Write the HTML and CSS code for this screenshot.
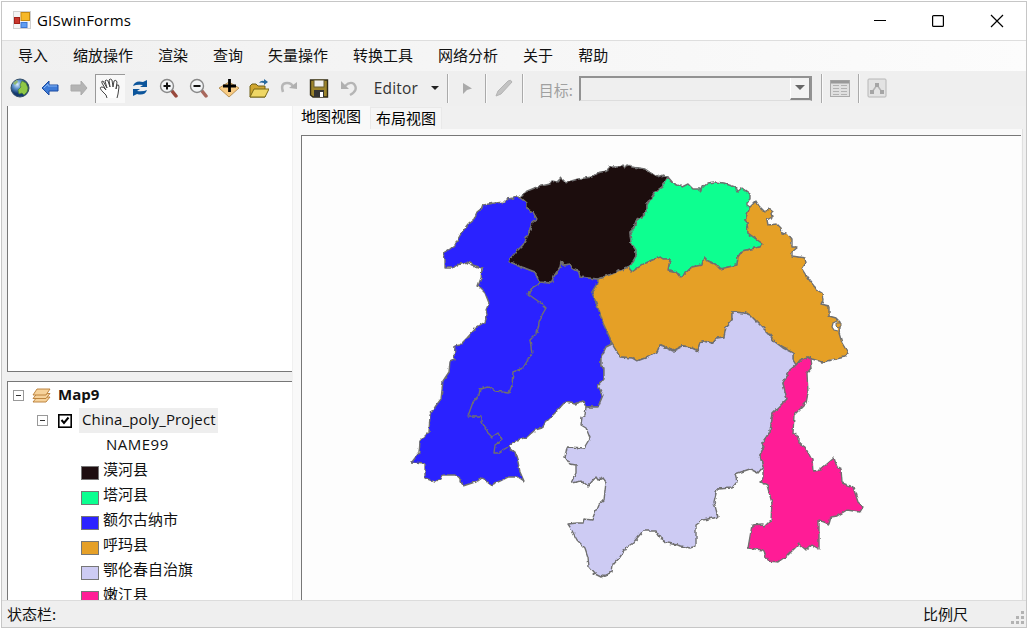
FILE: index.html
```
<!DOCTYPE html>
<html lang="zh-CN">
<head>
<meta charset="utf-8">
<title>GISwinForms</title>
<link rel="stylesheet" href="styles.css">
</head>
<body>
<div class="window">
  <header class="titlebar">
    <svg class="app-icon" width="18" height="18" viewBox="0 0 18 18"><rect x=".5" y=".5" width="17" height="17" fill="#f4f4f4" stroke="#d0d0d0"/><rect x="8" y="1.5" width="8.5" height="8" fill="#f6b828" stroke="#c58a12"/><rect x="1.5" y="6.5" width="5" height="6" fill="#c9362c" stroke="#a32018"/><rect x="8" y="11.5" width="6" height="5" fill="#5f9df0" stroke="#3f77d2"/></svg>
    <span class="title">GISwinForms</span>
    <svg class="controls" width="132" height="14" viewBox="0 0 132 14" fill="none" stroke="#000" stroke-width="1.2"><path d="M1 6.500H13" stroke-width="1"/><rect x="59.6" y="1.6" width="10.8" height="10.8" rx="1"/><path d="M118 1L130 13M130 1L118 13"/></svg>
  </header>
  <nav class="menubar"><span>导入</span><span>缩放操作</span><span>渲染</span><span>查询</span><span>矢量操作</span><span>转换工具</span><span>网络分析</span><span>关于</span><span>帮助</span></nav>
  <div class="toolbar">
    <div class="tool"><svg viewBox="0 0 20 20"><defs><radialGradient id="globe" cx=".35" cy=".3"><stop offset="0" stop-color="#d8ecff"/><stop offset=".5" stop-color="#5b8fc8"/><stop offset="1" stop-color="#143a70"/></radialGradient></defs><circle cx="10" cy="10" r="9" fill="url(#globe)" stroke="#344f68"/><path d="M12 3l4 2 2 5-1 4-3 3-2-2-3 1-1-4 3-3-1-2z" fill="#8fc846" stroke="#4b8130" stroke-width=".7"/><path d="M3 5l4-3 1 2-3 3z" fill="#92b970"/></svg></div>
    <div class="tool"><svg viewBox="0 0 20 20"><path d="M2 10L9 3V7H18V13H9V17Z" fill="#3e7bd7" stroke="#1b4ba0"/><path d="M4 10L8 6V8H17" fill="none" stroke="#82b4f5"/></svg></div>
    <div class="tool"><svg viewBox="0 0 20 20"><path d="M17 10L11 3V7H1V13H11V17Z" fill="#b4b4b4" stroke="#aaa"/></svg></div>
    <div class="tool pressed"><svg class="hand" viewBox="0 0 22 22"><path d="M8 20Q8 17 4 14Q0 10 2 9Q4 8 7 12L3 5Q2 3 4 3L8 10L6 3Q7 1 9 3L11 9L10 2Q11 0 13 2L14 9L15 3Q17 1 18 4L17 11L18 7Q20 6 20 9L19 16L18 20" fill="#fff" stroke="#444" stroke-width="1"/></svg></div>
    <div class="tool"><svg viewBox="0 0 20 20"><path d="M3 8Q5 2 13 4L17 2V9H10L13 7Q7 6 3 8Z" fill="#0c559b"/><path d="M17 12Q15 18 7 16L3 18V11H10L7 13Q13 14 17 12Z" fill="#0c559b"/></svg></div>
    <div class="tool"><svg viewBox="0 0 20 20"><path d="M13 13L17 18" stroke="#98483c" stroke-width="3.500" stroke-linecap="round"/><circle cx="8" cy="8" r="6.5" fill="#f2f4f6" stroke="#888" stroke-width="1.4"/><path d="M4.500 8H11.500M8 4.500V11.500" stroke="#111" stroke-width="2"/></svg></div>
    <div class="tool"><svg viewBox="0 0 20 20"><path d="M13 13L17 18" stroke="#a8675c" stroke-width="3.500" stroke-linecap="round"/><circle cx="8" cy="8" r="6.500" fill="#f2f4f6" stroke="#888" stroke-width="1.400"/><path d="M4.500 8H11.500" stroke="#111" stroke-width="2"/></svg></div>
    <div class="tool"><svg viewBox="0 0 20 20"><path d="M0 10L10 4L20 10L10 19Z" fill="#f8cb83" stroke="#a9803f" stroke-width=".8"/><path d="M4 8H17M10.500 1V14" stroke="#000" stroke-width="2.800"/></svg></div>
    <div class="tool"><svg viewBox="0 0 20 20"><path d="M1 19V8L3 6H7L9 8H16V19Z" fill="#d0a630" stroke="#716016"/><path d="M1 19L5 11H20L16 19Z" fill="#efd765" stroke="#796916"/><path d="M10 5Q12 2 15 3V1L19 4L15 7V5Q12 4 10 5Z" fill="#28699d"/></svg></div>
    <div class="tool"><svg viewBox="0 0 20 20"><path d="M4 14Q1 5 8 5Q13 5 14 9" fill="none" stroke="#b7b7b7" stroke-width="2.500"/><path d="M10 10L18 11L18 4Z" fill="#b0b0b0"/></svg></div>
    <div class="tool"><svg viewBox="0 0 20 20"><path d="M1.500 2H18.500V19H4L1.500 17Z" fill="#9c842c" stroke="#302b17" stroke-width="1.400"/><rect x="5" y="2" width="10" height="7" fill="#eee" stroke="#665c31"/><rect x="5" y="12" width="10" height="7" fill="#333"/><rect x="11" y="14" width="3" height="5" fill="#fff"/></svg></div>
    <div class="tool"><svg viewBox="0 0 20 20"><path d="M6 8Q11 3 15 6Q20 12 11 17" fill="none" stroke="#b5b5b5" stroke-width="2.300"/><path d="M2 3V11H10Z" fill="#b0b0b0"/></svg></div>
    <div class="editor">Editor<i class="arrow"></i></div>
    <i class="separator"></i>
    <div class="tool play"><svg viewBox="0 0 20 20"><path d="M6 5L15 10.500L10 12L6 16Z" fill="#aaa"/></svg></div>
    <i class="separator"></i>
    <div class="tool pencil"><svg viewBox="0 0 20 20"><path d="M2 18L4 13L14 3Q17 1 18 4L7 16Z" fill="#c3c3c3" stroke="#b4b4b4"/></svg></div>
    <i class="separator"></i>
    <span class="target">目标:</span>
    <div class="combo"><span class="combo-button"><i class="arrow"></i></span></div>
    <i class="separator"></i>
    <div class="tool table-tool"><svg viewBox="0 0 20 20"><rect x=".5" y="2.500" width="19" height="16" fill="#e0e0e0" stroke="#aaa"/><path d="M1 4H19" stroke="#999" stroke-width="3"/><path d="M3 7.500H9M3 10.500H9M3 13.500H9M3 16.500H9M11 7.500H17M11 10.500H17M11 13.500H17M11 16.500H17" stroke="#b2b2b2"/></svg></div>
    <i class="separator"></i>
    <div class="tool network-tool"><svg viewBox="0 0 20 20"><rect x="1" y="1" width="18" height="18" rx="1" fill="#e3e3e3" stroke="#b6b6b6"/><path d="M5 14L10 7L15 14" fill="none" stroke="#b3b3b3" stroke-width="1.500"/><path d="M8 5h4v4H8zM3 12h4v4H3zM13 12h4v4h-4z" fill="#a5a5a5"/></svg></div>
  </div>
  <main class="content">
    <aside class="sidebar">
      <div class="overview"></div>
      <div class="layers">
        <div class="row map-row"><i class="expander"></i><svg width="20" height="18" viewBox="0 0 20 18" fill="#f6d29a" stroke="#b77c34" stroke-width=".9"><path d="M1 16L5 11H18L14 16Z"/><path d="M1 12.500L5 7.500H18L14 12.500Z"/><path d="M1 9L5 3H18L14 9Z"/></svg><b>Map9</b></div>
        <div class="row layer-row"><i class="expander"></i><svg class="check" width="14" height="14" viewBox="0 0 14 14" fill="none" stroke="#000"><rect x=".8" y=".8" width="12.400" height="12.400" stroke-width="1.600"/><path d="M3.500 6L6 9L10.500 3.500" stroke-width="2"/></svg><span class="layer-name">China_poly_Project</span></div>
        <div class="row field">NAME99</div>
        <div class="row legend"><i class="swatch mohe"></i>漠河县</div>
        <div class="row legend"><i class="swatch tahe"></i>塔河县</div>
        <div class="row legend"><i class="swatch ergun"></i>额尔古纳市</div>
        <div class="row legend"><i class="swatch huma"></i>呼玛县</div>
        <div class="row legend"><i class="swatch oroqen"></i>鄂伦春自治旗</div>
        <div class="row legend"><i class="swatch nenjiang"></i>嫩江县</div>
      </div>
    </aside>
    <section class="viewer">
      <div class="tabs"><span class="tab active">地图视图</span><span class="tab">布局视图</span></div>
      <div class="page"><div class="map">
        <svg viewBox="302 136 720 464" width="720" height="464">
          <defs><filter id="coast" x="-2%" y="-2%" width="104%" height="104%"><feTurbulence type="fractalNoise" baseFrequency=".2" numOctaves="2" seed="4"/><feDisplacementMap in="SourceGraphic" scale="3.5" xChannelSelector="R" yChannelSelector="G"/></filter></defs>
          <g filter="url(#coast)" stroke="#707070" stroke-width="1.400" stroke-linejoin="round">
            <path fill="#2b22ff" d="M520 198L518 197 508 199 505 202 495 203 483 205 482 208 477 212 474 219 468 224 462 232 458 239 455 245 450 249 443 253 445 258 445 268 453 268 457 265 467 262 473 265 482 268 481 278 478 286 485 293 489 303 486 310 487 316 485 322 477 327 467 338 460 345 455 346 454 360 450 362 449 372 443 381 441 399 435 407 430 415 429 432 420 441 419 453 415 458 412 462 425 463 425 478 435 482 441 479 443 475 455 475 461 480 463 486 475 482 482 477 487 482 491 485 500 481 508 477 518 477 524 481 520 472 518 462 515 453 508 447 517 440 527 437 535 430 542 428 545 423 550 418 555 413 565 402 575 404 583 401 586 407 598 407 603 395 598 386 604 379 604 368 601 367 601 358 606 347 612 344 610 338 603 323 598 308 592 292 598 282 598 279 580 277 579 272 573 269 570 264 563 265 561 262 560 267 554 276 551 283 539 282 535 272 522 267 508 261 515 253 523 245 528 235 532 223 537 219 533 212 527 209 527 203Z"/>
            <path fill="#1e0e10" d="M520 197L525 192 537 187 550 184 552 181 557 182 561 178 564 181 568 182 578 179 592 177 597 173 607 171 609 167 620 167 623 165 625 168 628 165 632 167 645 169 657 177 663 175 668 177 662 187 655 192 647 205 647 212 636 221 634 228 630 232 631 243 636 250 636 256 631 265 628 267 612 274 598 279 580 277 579 272 573 269 570 264 563 265 561 262 560 267 554 276 551 283 539 282 535 272 522 267 508 261 515 253 523 245 528 235 532 223 537 219 533 212 527 209 527 203Z"/>
            <path fill="#0aff90" d="M668 177L673 183 682 187 688 184 693 189 700 189 702 191 703 187 708 183 715 182 723 183 735 187 737 192 742 188 750 194 750 199 747 202 747 205 750 207 745 220 747 222 748 233 763 244 760 247 742 251 738 257 737 265 720 269 715 264 708 261 704 257 702 265 692 267 681 277 677 272 668 270 670 259 663 259 660 257 645 263 632 272 628 267 631 265 636 256 636 250 631 243 630 232 634 228 636 221 647 212 647 205 655 192 662 187Z"/>
            <path fill="#e5a028" d="M750 207L756 201 759 206 765 212 769 208 773 211 771 213 772 217 767 220 768 225 777 224 781 228 782 233 787 234 792 240 792 247 798 247 792 252 792 256 805 258 806 263 802 269 807 277 817 290 822 293 823 300 821 304 829 306 829 316 836 318 840 322 840 328 839 333 842 343 848 353 845 357 822 362 812 359 807 357 800 360 796 365 793 360 793 353 783 348 775 342 768 333 750 315 745 313 732 312 732 320 726 327 724 337 717 338 713 343 703 341 700 342 698 351 690 347 683 346 673 351 660 345 657 352 648 357 637 361 632 358 620 357 612 344 610 338 603 323 598 308 592 292 598 282 598 279 612 274 628 267 632 272 645 263 660 257 663 259 670 259 668 270 677 272 681 277 692 267 702 265 704 257 708 261 715 264 720 269 737 265 738 257 742 251 760 247 763 244 748 233 747 222 745 220Z"/>
            <path fill="#cdcbf3" d="M612 344L620 357 632 358 637 361 648 357 657 352 660 345 673 351 683 346 690 347 698 351 700 342 703 341 713 343 717 338 724 337 726 327 732 320 732 312 745 313 750 315 768 333 775 342 783 348 793 353 793 360 796 365 790 370 783 383 787 399 773 413 770 432 762 443 764 447 760 455 763 467 758 473 750 469 735 474 737 482 732 488 717 489 714 502 718 517 703 520 696 525 696 546 690 548 668 543 662 540 656 531 643 531 633 543 627 547 620 557 613 565 612 572 601 577 595 574 589 567 588 557 585 548 577 540 570 527 568 524 577 523 583 523 584 519 592 520 598 505 604 500 606 482 603 478 598 480 596 477 588 486 582 481 571 483 576 473 576 465 570 464 565 457 567 447 584 448 590 438 586 428 581 425 582 417 585 415 586 407 598 407 603 395 598 386 604 379 604 368 601 367 601 358 606 347Z"/>
            <path fill="#ff1e96" d="M796 365L800 361 807 357 811 359 812 367 807 373 808 393 806 403 794 415 793 433 799 437 799 443 805 447 812 460 813 471 820 470 834 458 837 467 841 469 842 483 853 487 858 502 863 507 860 512 847 510 837 516 831 517 829 524 819 520 819 549 812 545 806 550 799 544 788 555 778 562 768 561 763 550 748 548 752 525 762 524 764 527 771 520 772 503 767 485 761 482 763 478 763 467 760 455 764 447 762 443 770 432 773 413 787 399 783 383 790 370Z"/>
            <path fill="none" d="M539 282L538 285 532 288 528 294 542 304 546 308 542 315 539 323 537 333 530 340 532 353 523 368 513 372 512 385 509 393 495 391 488 387 480 389 479 395 473 402 468 416 482 416 482 422 487 432 492 437 498 433 502 440 495 445 494 453 498 453 508 447"/>
          </g>
          <path d="M837 321L833 323 832 327 834 330 838 331" fill="#fdfdfd" stroke="#707070" stroke-width="1.200"/><path d="M836 323L841 323 841 326 838 328 836 326Z" fill="#e5a028" stroke="#707070"/>
        </svg>
      </div></div>
    </section>
  </main>
  <footer class="status"><span>状态栏:</span><span class="scale">比例尺</span><svg width="14" height="14" viewBox="0 0 14 14"><path d="M10 0h3v3h-3zM5 5h3v3H5zM10 5h3v3h-3zM0 10h3v3H0zM5 10h3v3H5zM10 10h3v3h-3z" fill="#b3b3b3"/></svg></footer>
</div>
</body>
</html>
```
FILE: styles.css
```
* { box-sizing: border-box; }
body { margin: 0; width: 1027px; height: 628px; overflow: hidden; background: #fff; color: #111; font: 15px/20px "Open Sans", "Noto Sans CJK SC", sans-serif; }
svg { display: block; flex: none; }
.window { display: flex; flex-direction: column; height: 627px; margin: 1px 0 0 1px; border: 1px solid #c6c6c6; background: #f0f0f0; }
.titlebar { display: flex; align-items: center; height: 39px; flex: none; padding: 0 21px 2px 11px; background: #fff; border-bottom: 1px solid #dedede; }
.title { margin-left: 6px; font-size: 15px; color: #000; letter-spacing: .2px; }
.controls { margin-left: auto; margin-top: 2px; }
.menubar { display: flex; gap: 25px; height: 30px; flex: none; padding: 4px 16px; background: linear-gradient(90deg, #f0f0f0, #fcfcfc); font-family: "Noto Sans CJK SC", sans-serif; font-size: 15px; }
.toolbar { display: flex; align-items: center; height: 35px; flex: none; padding: 0 0 1px 3px; background: #efefef; }
.tool { display: flex; align-items: center; justify-content: center; width: 29.900px; height: 29px; flex: none; }
.tool svg { width: 20px; height: 20px; }
.tool .hand { width: 22px; height: 22px; }
.pressed { background: #f8f8f8; border-top: 1px solid #999; border-left: 1px solid #999; }
.editor { display: flex; align-items: center; width: 83px; padding-left: 10px; font-size: 15.500px; letter-spacing: .2px; color: #333; }
.arrow { width: 0; height: 0; border: 4px solid transparent; border-top-color: #222; border-bottom: 0; margin-left: 13px; }
.separator { width: 2px; height: 29px; flex: none; background: linear-gradient(90deg, #aaa 50%, #fafafa 50%); }
.tool.play { width: 36px; }
.tool.pencil { width: 35px; }
.target { width: 55px; padding: 3px 0 0 15px; flex: none; color: #a0a0a0; font-family: "Noto Sans CJK SC", sans-serif; white-space: nowrap; }
.combo { width: 233px; height: 25px; flex: none; display: flex; justify-content: flex-end; border: 2px solid #929292; border-bottom: 1px solid #ddd; margin-right: 9px; background: #efefef; }
.combo-button { display: flex; align-items: center; justify-content: center; width: 20px; background: #f2f2f2; border-right: 1px solid #888; border-bottom: 2px solid #888; border-left: 1px solid #fff; }
.combo-button .arrow { margin: 0; border-width: 5px; border-bottom: 0; border-top-color: #666; }
.tool.table-tool { width: 35px; }
.tool.network-tool { width: 34px; }
.content { display: flex; flex: 1; min-height: 0; }
.sidebar { display: flex; flex-direction: column; gap: 9px; width: 290px; flex: none; padding-left: 5px; }
.overview { height: 266px; flex: none; background: #fff; border-left: 1px solid #777; border-bottom: 1px solid #777; }
.layers { flex: 1; min-height: 0; overflow: hidden; background: #fff; border-left: 1px solid #777; border-top: 1px solid #777; }
.row { display: flex; align-items: center; height: 25px; white-space: nowrap; font-family: "Open Sans", "Noto Sans CJK SC", sans-serif; font-size: 15px; }
.map-row { height: 26px; padding-left: 5px; }
.map-row svg { margin: 0 6px 0 8px; }
.map-row b { padding-bottom: 2px; }
.expander { width: 11px; height: 11px; flex: none; border: 1px solid #999; background: linear-gradient(#333, #333) center / 5px 1px no-repeat; }
.layer-row { padding-left: 29px; }
.check { margin: 0 7px 0 10px; }
.layer-name { padding: 1px 2px 4px 3px; background: #eee; letter-spacing: .12px; }
.field { padding: 0 0 4px 98px; letter-spacing: .5px; }
.legend { padding-left: 73px; line-height: 22px; align-items: flex-start; font-family: "Noto Sans CJK SC", sans-serif; }
.swatch { width: 18px; height: 14px; margin: 8px 4px 0 0; flex: none; border: 1px solid #777; }
.mohe { background: #1e0e10; }
.tahe { background: #0aff90; }
.ergun { background: #2b22ff; }
.huma { background: #e5a028; }
.oroqen { background: #cdcbf3; }
.nenjiang { background: #ff1e96; }
.viewer { display: flex; flex: 1; min-width: 0; flex-direction: column; padding: 0 3px 0 1px; }
.tabs { display: flex; height: 23px; flex: none; align-items: flex-end; font-family: "Noto Sans CJK SC", sans-serif; color: #000; }
.tab { height: 22px; width: 72px; padding: 0 0 0 5px; background: #f5f5f5; border: 1px solid #e9e9e9; border-bottom: 0; line-height: 20px; white-space: nowrap; }
.tab.active { height: 23px; width: 77px; padding: 0 0 0 8px; border: 0; background: #f9f9f9; }
.page { flex: 1; min-height: 0; padding: 6px 1px 0 8px; background: #f9f9f9; border-right: 1px solid #e0e0e0; }
.map { height: 100%; overflow: hidden; background: #fdfdfd; border-left: 1px solid #777; border-top: 1px solid #777; }
.status { display: flex; align-items: center; height: 27px; flex: none; padding: 0 1px 0 5px; border-top: 1px solid #dcdcdc; background: #efefef; font-family: "Noto Sans CJK SC", sans-serif; }
.status span { padding-bottom: 1px; }
.scale { margin-left: auto; margin-right: 43px; }
.status svg { margin-top: 8px; }
```
